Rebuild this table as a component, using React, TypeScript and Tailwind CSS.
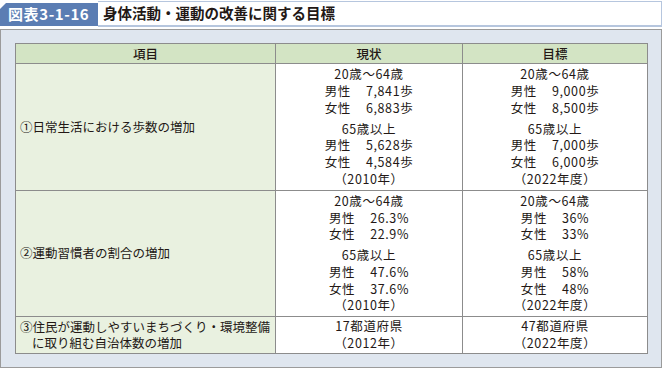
import React from "react";

type Group = string[];

const rows: {
  item: React.ReactNode;
  now: Group[];
  goal: Group[];
  h: string;
}[] = [
  {
    item: "①日常生活における歩数の増加",
    now: [
      ["20歳～64歳", "男性　7,841歩", "女性　6,883歩"],
      ["65歳以上", "男性　5,628歩", "女性　4,584歩", "（2010年）"],
    ],
    goal: [
      ["20歳～64歳", "男性　9,000歩", "女性　8,500歩"],
      ["65歳以上", "男性　7,000歩", "女性　6,000歩", "（2022年度）"],
    ],
    h: "h-[127px]",
  },
  {
    item: "②運動習慣者の割合の増加",
    now: [
      ["20歳～64歳", "男性　26.3%", "女性　22.9%"],
      ["65歳以上", "男性　47.6%", "女性　37.6%", "（2010年）"],
    ],
    goal: [
      ["20歳～64歳", "男性　36%", "女性　33%"],
      ["65歳以上", "男性　58%", "女性　48%", "（2022年度）"],
    ],
    h: "h-[126px]",
  },
  {
    item: (
      <>
        <div>③住民が運動しやすいまちづくり・環境整備</div>
        <div className="pl-[12px]">に取り組む自治体数の増加</div>
      </>
    ),
    now: [["17都道府県", "（2012年）"]],
    goal: [["47都道府県", "（2022年度）"]],
    h: "h-[37px]",
  },
];

function Line({ text }: { text: string }) {
  const parts = text.split("　");
  if (parts.length === 2) {
    return (
      <div className="leading-[16.8px]">
        {parts[0]}
        <span className="inline-block w-[15px]" />
        {parts[1]}
      </div>
    );
  }
  return <div className="leading-[16.8px]">{text}</div>;
}

function Cell({ groups }: { groups: Group[] }) {
  return (
    <td className="border border-[#8c8c8c] bg-white align-middle text-center tracking-[0.6px]">
      <div className="flex flex-col gap-[4px]">
        {groups.map((g, i) => (
          <div key={i}>
            {g.map((line) => (
              <Line key={line} text={line} />
            ))}
          </div>
        ))}
      </div>
    </td>
  );
}

export default function App() {
  return (
    <div
      className="w-[662px] h-[368px] bg-white text-[#231815] overflow-hidden"
      style={{ fontFamily: '"Noto Sans CJK JP", "Noto Sans", sans-serif' }}
    >
      {/* title */}
      <div className="flex h-[26px] mt-[1px]">
        <div className="w-[98px] mt-[2px] mb-[1px] bg-[#5b7db3] text-white font-bold text-[15px] leading-[22px] pl-[8px] tracking-[0.6px] [clip-path:polygon(6px_0,100%_0,100%_100%,0_100%,0_6px)]">
          図表3-1-16
        </div>
        <div className="flex-1 border border-l-0 border-b-2 border-[#b6c6de] pl-[5px] font-bold text-[14.5px] leading-[22px]">
          身体活動・運動の改善に関する目標
        </div>
      </div>

      {/* panel */}
      <div className="mt-[2px] h-[339px] border border-[#9b9b9b] bg-[#dfe6ef] pl-[14px] pt-[13px]">
        <table className="border-collapse text-[12.5px] w-[632px] table-fixed">
          <colgroup>
            <col className="w-[260px]" />
            <col className="w-[187px]" />
            <col className="w-[185px]" />
          </colgroup>
          <thead>
            <tr className="h-[20px] bg-[#d3e4c4]">
              <th className="border border-[#8c8c8c] font-medium leading-[18px]">項目</th>
              <th className="border border-[#8c8c8c] font-medium leading-[18px]">現状</th>
              <th className="border border-[#8c8c8c] font-medium leading-[18px]">目標</th>
            </tr>
          </thead>
          <tbody>
            {rows.map((r, i) => (
              <tr key={i} className={r.h}>
                <td className="border border-[#8c8c8c] bg-[#e9f1e0] px-[4px] align-middle leading-[16.5px]">
                  {r.item}
                </td>
                <Cell groups={r.now} />
                <Cell groups={r.goal} />
              </tr>
            ))}
          </tbody>
        </table>
      </div>
    </div>
  );
}
